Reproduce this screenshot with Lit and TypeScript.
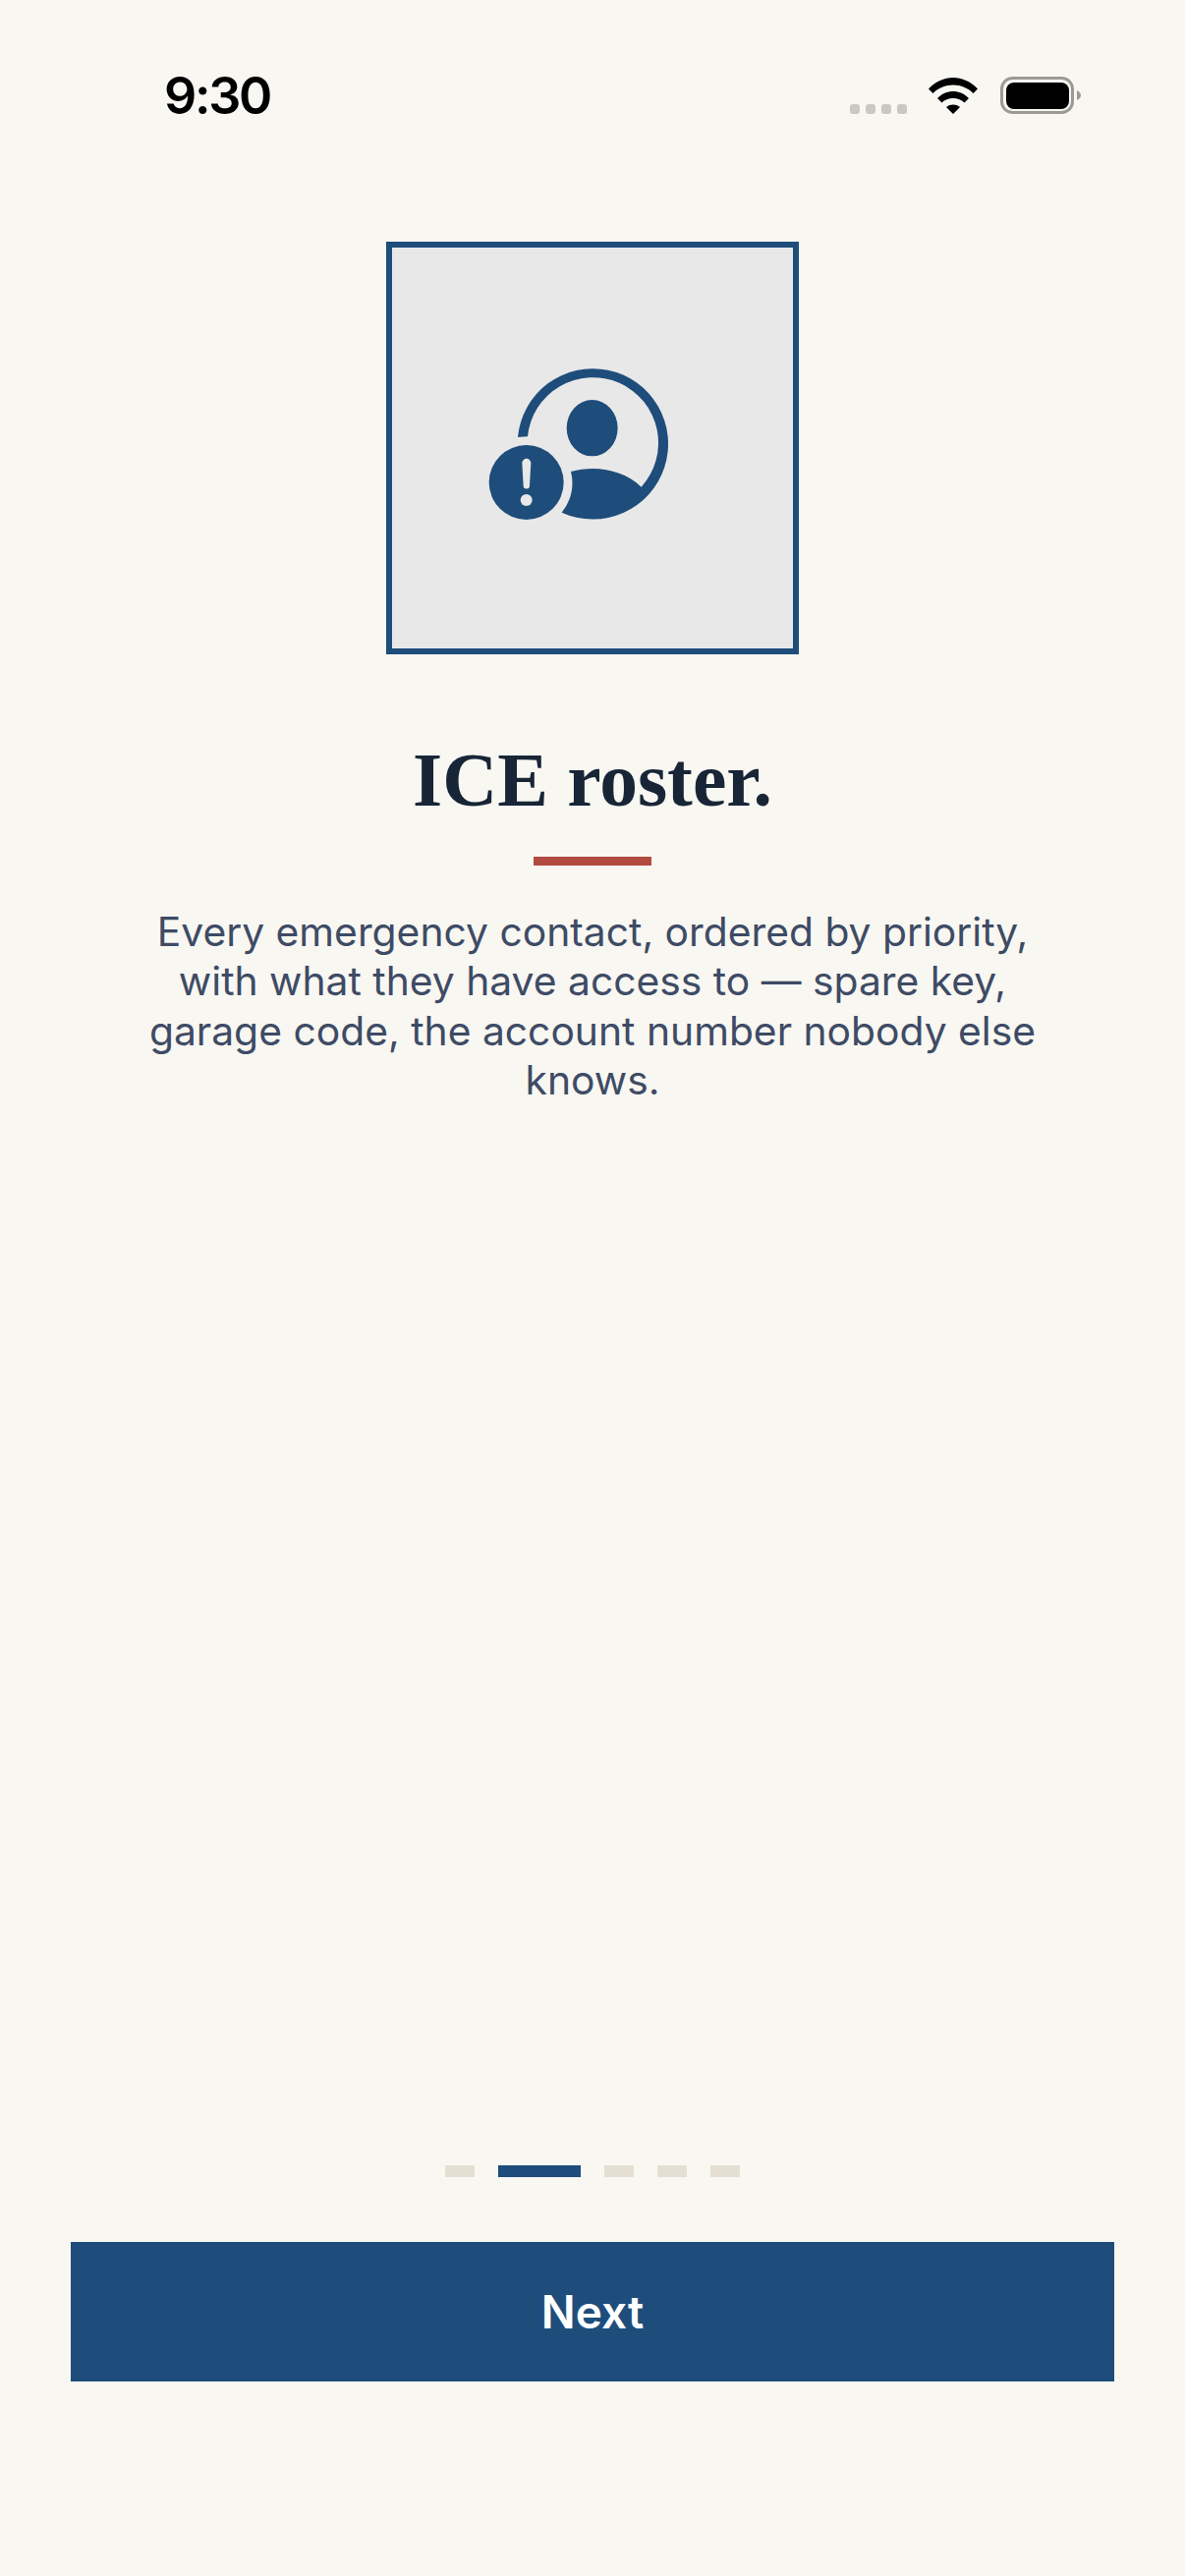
import { LitElement, html, css } from "lit";
import { customElement } from "lit/decorators.js";

@customElement("app-root")
export class AppRoot extends LitElement {
  static styles = css`
    :host { display: block; }
    .page {
      width: 1206px; height: 2622px; background: #f9f7f2; display: flex; flex-direction: column;
      align-items: center; box-sizing: border-box; font-family: Inter, "Liberation Sans", sans-serif;
    }
    .status { width: 100%; height: 246px; flex: none; display: flex; justify-content: space-between; align-items: flex-start; box-sizing: border-box; padding: 68px 106px 0 167px; }
    .time { font-size: 52px; line-height: 60px; font-weight: 600; color: #000; letter-spacing: -2.300px; }
    .sys { display: block; margin-top: 8px; }
    .hero { width: 420px; height: 420px; box-sizing: border-box; border: 6px solid #1e4d7b; background: #e8e8e8; display: flex; align-items: center; justify-content: center; flex: none; }
    .hero svg { display: block; }
    h1 { margin: 84px 0 0; font-family: "Liberation Serif", serif; font-weight: 700; font-size: 77.500px; line-height: 88px; color: #182537; text-align: center; }
    .rule { width: 120px; height: 9px; background: #b34a40; margin-top: 34px; flex: none; }
    p { margin: 42px 0 0; width: 930px; font-size: 40.800px; line-height: 50.300px; color: #3e4b65; text-align: center; }
    .spacer { flex: 1; }
    .dots { display: flex; gap: 24px; flex: none; }
    .dot { width: 30px; height: 12px; background: #e3dfd3; }
    .dot.on { width: 84px; background: #1e4d7b; }
    .next { margin: 66px 0 198px; width: 1062px; height: 142px; flex: none; border: 0; background: #1e4d7b; color: #fff; font: 600 46px Inter, sans-serif; }
  `;

  render() {
    return html`<div class="page">
      <div class="status">
        <div class="time">9:30</div>
        <svg class="sys" width="240" height="44" viewBox="860 76 240 44">
          <g fill="#c9c8c2">
            <rect x="865" y="106" width="10" height="10" rx="3"/><rect x="881" y="106" width="10" height="10" rx="3"/>
            <rect x="897" y="106" width="10" height="10" rx="3"/><rect x="913" y="106" width="10" height="10" rx="3"/>
          </g>
          <path d="M945 90.500C952 83 961 79 970 79C979 79 988 83 995 90.500L990.500 95C985 89.500 978 86.500 970 86.500C962 86.500 955 89.500 949.500 95ZM954 100C958.500 95.500 964 93 970 93C976 93 981.500 95.500 986 100L981.500 104.500C978.500 101.500 974.500 100 970 100C965.500 100 961.500 101.500 958.500 104.500ZM963 109C965 107.300 967.500 106.500 970 106.500C972.500 106.500 975 107.300 977 109L970 116Z" fill="#000"/>
          <rect x="1019.500" y="79.500" width="72" height="35" rx="11" fill="none" stroke="#9b9a94" stroke-width="3"/>
          <rect x="1024" y="84" width="64" height="27" rx="8" fill="#000"/>
          <path d="M1096 92C1098.500 93 1100 95 1100 97C1100 99 1098.500 101 1096 102Z" fill="#9b9a94"/>
        </svg>
      </div>
      <div class="hero">
        <svg width="240" height="200" viewBox="39 18 720 600" fill="#1e4d7b">
          <path d="M171 285A230 230 0 1 1 305 515A141 141 0 0 0 333 390C355 384 378 381 400 381C455 381 510 400 548 437A200 200 0 1 0 201 283Z"/>
          <ellipse cx="398" cy="257" rx="78" ry="86"/>
          <circle cx="197" cy="423" r="114"/>
          <path d="M184 364a13.500 13.500 0 0 1 27 0L207 433a9.500 9.500 0 0 1 -19 0Z" fill="#e8e8e8"/>
          <circle cx="197" cy="477" r="18" fill="#e8e8e8"/>
        </svg>
      </div>
      <h1>ICE roster.</h1>
      <div class="rule"></div>
      <p>Every emergency contact, ordered by priority, with what they have access to — spare key, garage code, the account number nobody else knows.</p>
      <div class="spacer"></div>
      <div class="dots"><div class="dot"></div><div class="dot on"></div><div class="dot"></div><div class="dot"></div><div class="dot"></div></div>
      <button class="next">Next</button>
    </div>`;
  }
}
